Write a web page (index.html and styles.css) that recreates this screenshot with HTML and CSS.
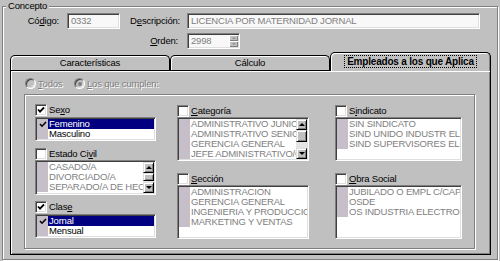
FILE: index.html
```html
<!DOCTYPE html>
<html lang="es">
<head>
    <meta charset="UTF-8">
    <title>Concepto - Empleados a los que Aplica</title>
    <link rel="stylesheet" href="styles.css">
</head>
<body>
    <fieldset class="concepto">
        <legend>Concepto</legend>

        <div class="fila fila-1">
            <span class="etiqueta et-codigo">Có<u>d</u>igo:</span>
            <div class="campo campo-codigo">0332</div>
            <span class="etiqueta et-descripcion">D<u>e</u>scripción:</span>
            <div class="campo campo-descripcion">LICENCIA POR MATERNIDAD JORNAL</div>
        </div>
        <div class="fila fila-2">
            <span class="etiqueta et-orden"><u>O</u>rden:</span>
            <div class="campo campo-orden">
                <span>2998</span>
                <div class="spin">
                    <span class="spin-btn"><i class="flecha arriba gris"></i></span>
                    <span class="spin-btn"><i class="flecha abajo gris"></i></span>
                </div>
            </div>
        </div>

        <div class="tabctl">
            <div class="tabs">
                <div class="tab">Características</div>
                <div class="tab">Cálculo</div>
                <div class="tab activa"><span class="foco">Empleados a los que Aplica</span></div>
            </div>
            <div class="panel">
                <div class="radios">
                    <span class="radio radio-todos"><i class="circulo"></i><span class="deshab"><u>T</u>odos</span></span>
                    <span class="radio"><i class="circulo marcado"></i><span class="deshab"><u>L</u>os que cumplen:</span></span>
                </div>

                <div class="grupo">
                    <!-- columna 1 -->
                    <div class="col col-1">
                        <div class="check">
                            <i class="caja"><svg width="8" height="8" viewBox="0 0 8 8"><path d="M1 3.5 L3 5.6 L7 1.5" stroke="#000" stroke-width="1.8" fill="none"/></svg></i>
                            <span>Se<u>x</u>o</span>
                        </div>
                        <div class="lista lista-sexo">
                            <div class="items">
                                <div class="item sel"><span class="margen"><svg width="8" height="7" viewBox="0 0 8 7"><path d="M1 3 L3 5.2 L7 1" stroke="#000" stroke-width="1.6" fill="none"/></svg></span><span class="texto">Femenino</span></div>
                                <div class="item"><span class="margen"></span><span class="texto">Masculino</span></div>
                            </div>
                        </div>

                        <div class="check check-civil">
                            <i class="caja"></i>
                            <span>Estado Ci<u>v</u>il</span>
                        </div>
                        <div class="lista lista-civil inactiva">
                            <div class="items">
                                <div class="item"><span class="margen"></span><span class="texto">CASADO/A</span></div>
                                <div class="item"><span class="margen"></span><span class="texto">DIVORCIADO/A</span></div>
                                <div class="item"><span class="margen"></span><span class="texto">SEPARADO/A DE HECHO</span></div>
                            </div>
                            <div class="scroll">
                                <span class="sbtn"><i class="flecha arriba"></i></span>
                                <span class="pulgar pulgar-civil"></span>
                                <span class="hueco"></span>
                                <span class="sbtn"><i class="flecha abajo"></i></span>
                            </div>
                        </div>

                        <div class="check check-clase">
                            <i class="caja"><svg width="8" height="8" viewBox="0 0 8 8"><path d="M1 3.5 L3 5.6 L7 1.5" stroke="#000" stroke-width="1.8" fill="none"/></svg></i>
                            <span>Clas<u>e</u></span>
                        </div>
                        <div class="lista lista-clase">
                            <div class="items">
                                <div class="item sel"><span class="margen"><svg width="8" height="7" viewBox="0 0 8 7"><path d="M1 3 L3 5.2 L7 1" stroke="#000" stroke-width="1.6" fill="none"/></svg></span><span class="texto">Jornal</span></div>
                                <div class="item"><span class="margen"></span><span class="texto">Mensual</span></div>
                            </div>
                        </div>
                    </div>

                    <!-- columna 2 -->
                    <div class="col col-2">
                        <div class="check check-alto">
                            <i class="caja"></i>
                            <span><u>C</u>ategoría</span>
                        </div>
                        <div class="lista lista-alta inactiva">
                            <div class="items">
                                <div class="item"><span class="margen"></span><span class="texto">ADMINISTRATIVO JUNIOR</span></div>
                                <div class="item"><span class="margen"></span><span class="texto">ADMINISTRATIVO SENIOR</span></div>
                                <div class="item"><span class="margen"></span><span class="texto">GERENCIA GENERAL</span></div>
                                <div class="item"><span class="margen"></span><span class="texto">JEFE ADMINISTRATIVO/CONTABLE</span></div>
                            </div>
                            <div class="scroll">
                                <span class="sbtn"><i class="flecha arriba"></i></span>
                                <span class="pulgar"></span>
                                <span class="hueco"></span>
                                <span class="sbtn"><i class="flecha abajo"></i></span>
                            </div>
                        </div>

                        <div class="check check-bajo">
                            <i class="caja"></i>
                            <span><u>S</u>ección</span>
                        </div>
                        <div class="lista lista-baja inactiva">
                            <div class="items">
                                <div class="item"><span class="margen"></span><span class="texto">ADMINISTRACION</span></div>
                                <div class="item"><span class="margen"></span><span class="texto">GERENCIA GENERAL</span></div>
                                <div class="item"><span class="margen"></span><span class="texto">INGENIERIA Y PRODUCCION</span></div>
                                <div class="item"><span class="margen"></span><span class="texto">MARKETING Y VENTAS</span></div>
                            </div>
                        </div>
                    </div>

                    <!-- columna 3 -->
                    <div class="col col-3">
                        <div class="check check-alto">
                            <i class="caja"></i>
                            <span>S<u>i</u>ndicato</span>
                        </div>
                        <div class="lista lista-alta inactiva">
                            <div class="items">
                                <div class="item"><span class="margen"></span><span class="texto">SIN SINDICATO</span></div>
                                <div class="item"><span class="margen"></span><span class="texto">SIND UNIDO INDUSTR ELECTR</span></div>
                                <div class="item"><span class="margen"></span><span class="texto">SIND SUPERVISORES ELECTR</span></div>
                            </div>
                        </div>

                        <div class="check check-bajo">
                            <i class="caja"></i>
                            <span><u>O</u>bra Social</span>
                        </div>
                        <div class="lista lista-baja inactiva">
                            <div class="items">
                                <div class="item"><span class="margen"></span><span class="texto">JUBILADO O EMPL C/CAPITAS</span></div>
                                <div class="item"><span class="margen"></span><span class="texto">OSDE</span></div>
                                <div class="item"><span class="margen"></span><span class="texto">OS INDUSTRIA ELECTROMEC</span></div>
                            </div>
                        </div>
                    </div>
                </div>
            </div>
        </div>
    </fieldset>
</body>
</html>
```

FILE: styles.css
```css
* {
    box-sizing: border-box;
}

body {
    margin: 0;
    width: 500px;
    height: 261px;
    overflow: hidden;
    background-color: #c0c0c0;
    font-family: "Liberation Sans", Arial, sans-serif;
    font-size: 9.5px;
    letter-spacing: -0.2px;
    color: #000;
}

u {
    text-underline-offset: 1px;
}

i {
    font-style: normal;
}

/* marco "Concepto" */
.concepto {
    margin: 0 2px;
    padding: 0;
    height: 260px;
    min-width: 0;
    border: 1px solid #808080;
    box-shadow: 1px 1px 0 #fff, inset 1px 1px 0 #fff;
}

.concepto legend {
    margin-left: 3px;
    padding: 0 2px;
    height: 12px;
    line-height: 12px;
    background-color: #c0c0c0;
}

.fila {
    display: flex;
    align-items: center;
    height: 16px;
}

.fila-1 {
    margin-top: 1px;
}

.fila-2 {
    margin-top: 4px;
}

.etiqueta {
    text-align: right;
    line-height: 12px;
}

.et-codigo {
    width: 56px;
}

.et-descripcion {
    width: 60px;
}

.et-orden {
    width: 175px;
}

.campo {
    height: 16px;
    padding-left: 3px;
    line-height: 14px;
    white-space: nowrap;
    overflow: hidden;
    color: #808080;
    background-color: #f8f8f8;
    border: 1px solid;
    border-color: #808080 #fff #fff #808080;
    box-shadow: inset 1px 1px 0 #404040, inset -1px -1px 0 #dfdfdf;
}

.campo-codigo {
    margin-left: 8px;
    width: 53px;
}

.campo-descripcion {
    margin-left: 7px;
    width: 293px;
}

.campo-orden {
    margin-left: 9px;
    width: 53px;
    display: flex;
    justify-content: space-between;
    padding-right: 1px;
}

.spin {
    display: flex;
    flex-direction: column;
    width: 9px;
    padding: 1px 0;
}

.spin-btn {
    height: 6px;
    display: flex;
    align-items: center;
    justify-content: center;
    background-color: #c0c0c0;
    box-shadow: inset 1px 1px 0 #fff, inset -1px -1px 0 #808080;
}

.flecha {
    width: 0;
    height: 0;
    border-left: 3px solid transparent;
    border-right: 3px solid transparent;
}

.flecha.arriba {
    border-bottom: 3px solid #000;
}

.flecha.abajo {
    border-top: 3px solid #000;
}

.flecha.gris {
    border-left-width: 2px;
    border-right-width: 2px;
    border-top-color: #909090;
    border-bottom-color: #909090;
}

.flecha.arriba.gris {
    border-bottom-width: 2px;
}

.flecha.abajo.gris {
    border-top-width: 2px;
}

/* pestañas */
.tabctl {
    margin: 3px 0 0 7px;
    width: 481px;
}

.tabs {
    display: flex;
    align-items: flex-end;
    height: 18px;
    position: relative;
    z-index: 1;
}

.tab {
    width: 160px;
    height: 15px;
    line-height: 13px;
    text-align: center;
    background-color: #c0c0c0;
    border: 1px solid #000;
    border-bottom: 0;
    border-radius: 5px 5px 0 0;
    box-shadow: inset 1px 1px 0 #fff;
}

.tab.activa {
    width: 161px;
    height: 19px;
    margin-bottom: -1px;
    padding-top: 2px;
    font-size: 10px;
    font-weight: bold;
    box-shadow: inset 1px 1px 0 #fff, inset -1px 0 0 #808080;
}

.foco {
    border: 1px dotted #000;
    padding: 0 2px;
}

.panel {
    height: 185px;
    padding: 7px 0 0 13px;
    border: 1px solid #000;
    box-shadow: inset 1px 1px 0 #fff, inset -1px -1px 0 #808080;
}

.radios {
    display: flex;
    align-items: center;
    height: 11px;
    padding-left: 1px;
}

.radio {
    display: flex;
    align-items: center;
}

.radio-todos {
    width: 49px;
}

.circulo {
    width: 11px;
    height: 11px;
    margin-right: 2px;
    display: flex;
    align-items: center;
    justify-content: center;
    border-radius: 50%;
    background-color: #c0c0c0;
    border: 1px solid;
    border-color: #808080 #fff #fff #808080;
    box-shadow: inset 1px 1px 0 #404040, inset -1px -1px 0 #dfdfdf;
}

.circulo.marcado::after {
    content: "";
    width: 4px;
    height: 4px;
    border-radius: 50%;
    background-color: #808080;
}

.deshab {
    color: #808080;
    text-shadow: 1px 1px 0 #fff;
}

/* grupo de filtros */
.grupo {
    display: flex;
    width: 451px;
    height: 155px;
    margin-top: 5px;
    padding: 8px 0 0 10px;
    border: 1px solid #808080;
    box-shadow: 1px 1px 0 #fff, inset 1px 1px 0 #fff;
}

.col-1 {
    width: 121px;
}

.col-2 {
    width: 132px;
    margin-left: 21px;
}

.col-3 {
    width: 127px;
    margin-left: 26px;
}

.check {
    display: flex;
    align-items: center;
    height: 13px;
    line-height: 12px;
}

.check-civil {
    margin-top: 6px;
}

.check-clase {
    margin-top: 5px;
}

.check-alto {
    margin-top: 1px;
}

.check-bajo {
    margin-top: 11px;
}

.caja {
    width: 12px;
    height: 12px;
    margin-right: 2px;
    display: flex;
    align-items: center;
    justify-content: center;
    background-color: #fff;
    border: 1px solid;
    border-color: #808080 #fff #fff #808080;
    box-shadow: inset 1px 1px 0 #404040, inset -1px -1px 0 #dfdfdf;
}

.lista {
    display: flex;
    padding: 1px;
    overflow: hidden;
    background-color: #fff;
    border: 1px solid;
    border-color: #808080 #fff #fff #808080;
    box-shadow: inset 1px 1px 0 #404040, inset -1px -1px 0 #dfdfdf;
}

.lista-sexo {
    margin-top: 1px;
    height: 24px;
}

.lista-civil {
    height: 35px;
}

.lista-clase {
    margin-top: 1px;
    height: 24px;
}

.lista-alta {
    height: 44px;
}

.lista-baja {
    height: 54px;
}

.items {
    flex: 1;
    min-width: 0;
    overflow: hidden;
}

.item {
    display: flex;
    height: 10px;
    line-height: 10px;
    white-space: nowrap;
}

.margen {
    flex: none;
    width: 11px;
    display: flex;
    align-items: center;
    justify-content: center;
    background-color: #c6bec8;
}

.texto {
    flex: 1;
    padding-left: 1px;
    overflow: hidden;
}

.item.sel .texto {
    background-color: #000080;
    color: #fff;
}

.inactiva .texto {
    color: #808080;
}

.scroll {
    flex: none;
    width: 11px;
    display: flex;
    flex-direction: column;
    background-color: #e4e4e4;
}

.sbtn,
.pulgar {
    flex: none;
    height: 11px;
    display: flex;
    align-items: center;
    justify-content: center;
    background-color: #c0c0c0;
    border: 1px solid;
    border-color: #dfdfdf #000 #000 #dfdfdf;
    box-shadow: inset 1px 1px 0 #fff, inset -1px -1px 0 #808080;
}

.pulgar {
    height: 12px;
}

.pulgar-civil {
    height: 8px;
}

.hueco {
    flex: 1;
}
```
